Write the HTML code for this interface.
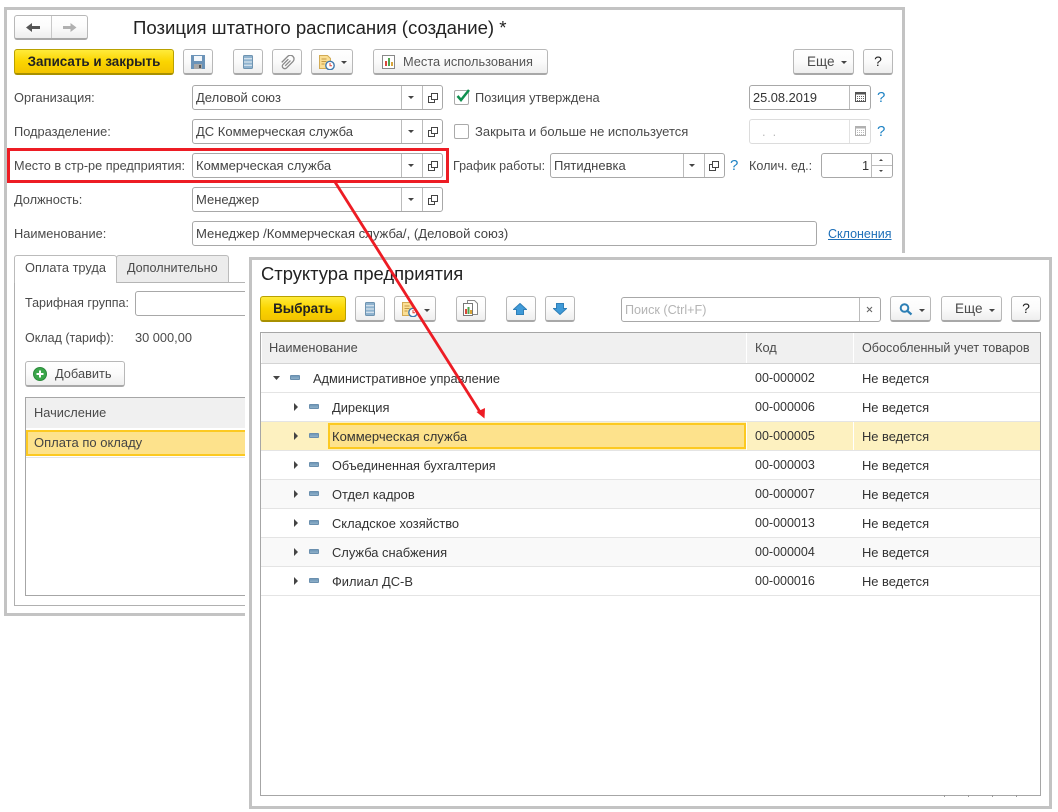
<!DOCTYPE html>
<html><head><meta charset="utf-8"><style>
html,body{margin:0;padding:0;background:#fff}
#r{position:relative;width:1058px;height:812px;overflow:hidden;background:#fff;font-family:"Liberation Sans",sans-serif;font-size:12.8px;color:#4a4a4a}
#r div,#r svg,#r span{position:absolute;box-sizing:border-box}
.t{white-space:nowrap;height:20px;line-height:20px}
.d{color:#333;font-size:12.9px;margin-top:1px}
.n{font-size:13px;color:#444}
.c{color:#333;font-size:12.5px}
.b{background:linear-gradient(#fff 0,#fbfbfb 50%,#eee 100%);border:1px solid #b8b8b8;border-bottom:2px solid #a8a8a8;border-radius:3px;text-align:center;line-height:24px;white-space:nowrap}
.y{background:linear-gradient(#ffeb3b,#fbd500 50%,#f3c400);border:1px solid #b9a100;border-bottom:2px solid #a89000;border-radius:3px;text-align:center;color:#222;font-weight:bold;line-height:24px;font-size:13.4px;white-space:nowrap}
.f{background:#fff;border:1px solid #a8a8a8;border-radius:3px;height:25px}
.v{width:1px;top:0;bottom:0;background:#bbb}
.l{height:1px;background:#e4e4e4}
.q{color:#1d82c4;font-size:15px;white-space:nowrap;line-height:20px;height:20px}
.ic{background:linear-gradient(#6f97b8,#8fb0c9);width:10px;height:5px;border:1px solid #6a8fae;border-radius:1px}
</style></head><body><div id="r">

<svg width="0" height="0" style="left:0;top:0"><defs>
<g id="dd"><path d="M0 0h6l-3 3z" fill="#444"/></g>
<g id="op"><path d="M3.500 3.500h-3v6h6v-3M3.500 .5h6v6h-6z" fill="#fff" stroke="#444" stroke-width="1"/></g>
<g id="cal"><rect x=".5" y="1.500" width="10" height="9" fill="#fff" stroke="#555"/><rect x="1" y="1.500" width="9" height="2" fill="#555"/><path d="M2 5.500h7M2 7.500h7M2 9.500h7" stroke="#666" stroke-dasharray="1 1"/></g>
<g id="lst"><rect x=".5" y=".5" width="9" height="13" rx="1" fill="#8fb3cf" stroke="#6e93b0"/><path d="M1 3.800h8M1 7h8M1 10.200h8" stroke="#e8f0f6" stroke-width="1"/></g>
<g id="doc"><path d="M.5 .5h8l3 3v10h-11z" fill="#fbdf94" stroke="#d2ab55"/><path d="M2.500 4h5M2.500 6.500h5M2.500 9h3" stroke="#c49a44"/><circle cx="11" cy="10.500" r="4.200" fill="#fff" stroke="#3f79ad" stroke-width="1.400"/><path d="M11 8v2.800h2" stroke="#d8453a" fill="none"/></g>
</defs></svg>

<!-- back window -->
<div style="left:4px;top:7px;width:901px;height:609px;background:#fff;border:3px solid #c3c3c3"></div>

<!-- nav -->
<div class="b" style="left:14px;top:15px;width:74px;height:25px"></div>
<div style="left:51px;top:16px;width:1px;height:22px;background:#c8c8c8"></div>
<svg style="left:26px;top:22px" width="15" height="11"><path d="M0 5.500L6 1v3h8v3H6v3z" fill="#555"/></svg>
<svg style="left:62px;top:22px" width="15" height="11"><path d="M14.500 5.500L8.500 1v3H1v3h7.500v3z" fill="#b0b0b0"/></svg>
<div class="t" style="left:133px;top:17px;font-size:18.6px;color:#222;height:22px;line-height:22px">Позиция штатного расписания (создание) *</div>

<!-- toolbar -->
<div class="y" style="left:14px;top:49px;width:160px;height:26px">Записать и закрыть</div>
<div class="b" style="left:183px;top:49px;width:30px;height:26px"></div>
<svg style="left:191px;top:55px" width="14" height="14"><path d="M0 0h14v14H0z" fill="#6b93b8"/><rect x="3" y="1" width="8" height="5" fill="#f2f6fa"/><rect x="3" y="9" width="8" height="5" fill="#a8a8a8"/><rect x="8" y="10" width="2" height="3" fill="#555"/></svg>
<div class="b" style="left:233px;top:49px;width:30px;height:26px"></div>
<svg style="left:243px;top:55px" width="10" height="14"><use href="#lst"/></svg>
<div class="b" style="left:272px;top:49px;width:30px;height:26px"></div>
<svg style="left:280px;top:55px" width="16" height="16" viewBox="0 0 16 16"><g transform="rotate(45 8 8)" fill="none" stroke="#8a8a8a" stroke-width="1.300"><path d="M5.500 5v7.500a2.500 2.500 0 0 0 5 0V3.500a3.700 3.700 0 0 0-7.400 0V12"/><path d="M8 4.500V12"/></g></svg>
<div class="b" style="left:311px;top:49px;width:42px;height:26px"></div>
<svg style="left:319px;top:55px" width="16" height="15"><use href="#doc"/></svg>
<svg style="left:341px;top:61px" width="6" height="4"><use href="#dd"/></svg>
<div class="b" style="left:373px;top:49px;width:175px;height:26px;text-align:left;padding-left:29px;color:#555;line-height:23px">Места использования</div>
<svg style="left:382px;top:55px" width="13" height="14"><rect x=".5" y=".5" width="12" height="13" fill="#fff" stroke="#888"/><rect x="3" y="6" width="2" height="5" fill="#d9473a"/><rect x="6" y="3" width="2" height="8" fill="#4ea24e"/><rect x="9" y="7" width="2" height="4" fill="#d9a63a"/></svg>
<div class="b" style="left:793px;top:49px;width:61px;height:26px;text-align:left;padding-left:13px;font-size:13.5px;line-height:23px">Еще</div>
<svg style="left:841px;top:61px" width="6" height="4"><use href="#dd"/></svg>
<div class="b" style="left:863px;top:49px;width:30px;height:26px;color:#222;font-size:14px;line-height:23px">?</div>

<!-- labels -->
<div class="t" style="left:14px;top:88px">Организация:</div>
<div class="t" style="left:14px;top:122px">Подразделение:</div>
<div class="t" style="left:14px;top:156px;font-size:12.7px">Место в стр-ре предприятия:</div>
<div class="t" style="left:14px;top:190px">Должность:</div>
<div class="t" style="left:14px;top:224px">Наименование:</div>

<!-- fields -->
<div class="f" style="left:192px;top:85px;width:251px"><div class="v" style="left:208px"></div><div class="v" style="left:229px"></div></div>
<div class="t n" style="left:196px;top:88px">Деловой союз</div>
<div class="f" style="left:192px;top:119px;width:251px"><div class="v" style="left:208px"></div><div class="v" style="left:229px"></div></div>
<div class="t n" style="left:196px;top:122px">ДС Коммерческая служба</div>
<div class="f" style="left:192px;top:153px;width:251px"><div class="v" style="left:208px"></div><div class="v" style="left:229px"></div></div>
<div class="t n" style="left:196px;top:156px">Коммерческая служба</div>
<div class="f" style="left:192px;top:187px;width:251px"><div class="v" style="left:208px"></div><div class="v" style="left:229px"></div></div>
<div class="t n" style="left:196px;top:190px">Менеджер</div>
<div class="f" style="left:192px;top:221px;width:625px"></div>
<div class="t n" style="left:196px;top:224px;font-size:13.1px">Менеджер /Коммерческая служба/, (Деловой союз)</div>

<svg style="left:408px;top:96px" width="6" height="4"><use href="#dd"/></svg>
<svg style="left:408px;top:130px" width="6" height="4"><use href="#dd"/></svg>
<svg style="left:408px;top:164px" width="6" height="4"><use href="#dd"/></svg>
<svg style="left:408px;top:198px" width="6" height="4"><use href="#dd"/></svg>
<svg style="left:428px;top:93px" width="10" height="10"><use href="#op"/></svg>
<svg style="left:428px;top:127px" width="10" height="10"><use href="#op"/></svg>
<svg style="left:428px;top:161px" width="10" height="10"><use href="#op"/></svg>
<svg style="left:428px;top:195px" width="10" height="10"><use href="#op"/></svg>

<!-- checkboxes -->
<div style="left:454px;top:90px;width:15px;height:15px;border:1px solid #aaa;border-radius:2px;background:#fff"></div>
<svg style="left:455px;top:88px" width="16" height="15"><path d="M2.500 8l3.500 4L14 2" fill="none" stroke="#109050" stroke-width="2.500"/></svg>
<div class="t" style="left:475px;top:88px">Позиция утверждена</div>
<div style="left:454px;top:124px;width:15px;height:15px;border:1px solid #aaa;border-radius:2px;background:#fff"></div>
<div class="t n" style="left:475px;top:122px;color:#4a4a4a">Закрыта и больше не используется</div>

<!-- dates -->
<div class="f" style="left:749px;top:85px;width:122px"><div class="v" style="left:99px"></div></div>
<div class="t" style="left:753px;top:88px;color:#333">25.08.2019</div>
<svg style="left:855px;top:91px" width="11" height="12"><use href="#cal"/></svg>
<div class="q" style="left:877px;top:88px">?</div>
<div class="f" style="left:749px;top:119px;width:122px;border-color:#dcdcdc"><div class="v" style="left:99px;background:#e2e2e2"></div></div>
<div class="t" style="left:762px;top:122px;color:#bbb">. &nbsp;.</div>
<svg style="left:855px;top:125px;opacity:.45" width="11" height="12"><use href="#cal"/></svg>
<div class="q" style="left:877px;top:122px">?</div>

<!-- grafik -->
<div class="t" style="left:453px;top:156px;font-size:12.5px">График работы:</div>
<div class="f" style="left:550px;top:153px;width:175px"><div class="v" style="left:132px"></div><div class="v" style="left:153px"></div></div>
<div class="t n" style="left:554px;top:156px">Пятидневка</div>
<svg style="left:689px;top:164px" width="6" height="4"><use href="#dd"/></svg>
<svg style="left:709px;top:161px" width="10" height="10"><use href="#op"/></svg>
<div class="q" style="left:730px;top:156px">?</div>
<div class="t" style="left:749px;top:156px;font-size:12.6px">Колич. ед.:</div>
<div class="f" style="left:821px;top:153px;width:72px"><div class="v" style="left:49px"></div><div style="left:50px;right:0;top:11px;height:1px;background:#bbb"></div></div>
<div class="t" style="left:862px;top:156px;color:#333">1</div>
<svg style="left:878px;top:158px" width="6" height="16"><path d="M1 3h4L3 1zM1 12h4l-2 2z" fill="#444"/></svg>

<div class="t" style="left:828px;top:224px;color:#1d6fb8;text-decoration:underline;font-size:12.5px">Склонения</div>

<!-- red box -->
<div style="left:7px;top:148px;width:442px;height:35px;border:3px solid #ed1c24"></div>

<!-- tabs -->
<div style="left:14px;top:282px;width:232px;height:1px;background:#b5b5b5"></div>
<div style="left:14px;top:282px;width:1px;height:324px;background:#b0b0b0"></div>
<div style="left:14px;top:605px;width:232px;height:1px;background:#b0b0b0"></div>
<div style="left:116px;top:255px;width:113px;height:28px;background:#ececec;border:1px solid #bbb;border-bottom:1px solid #b5b5b5;border-radius:3px 3px 0 0"></div>
<div style="left:14px;top:255px;width:103px;height:28px;background:#fff;border:1px solid #bbb;border-bottom:0;border-radius:3px 3px 0 0"></div>
<div class="t" style="left:25px;top:258px">Оплата труда</div>
<div class="t" style="left:127px;top:258px;font-size:12.6px">Дополнительно</div>

<div class="t" style="left:25px;top:293px;font-size:12.5px">Тарифная группа:</div>
<div class="f" style="left:135px;top:291px;width:130px"></div>
<div class="t" style="left:25px;top:328px;font-size:12.5px">Оклад (тариф):</div>
<div class="t" style="left:135px;top:328px">30 000,00</div>

<div class="b" style="left:25px;top:361px;width:100px;height:26px;text-align:left;padding-left:29px;line-height:23px">Добавить</div>
<svg style="left:33px;top:367px" width="14" height="14"><circle cx="7" cy="7" r="6.500" fill="#3aa64a" stroke="#2b8a3b"/><path d="M7 3.500v7M3.500 7h7" stroke="#fff" stroke-width="2"/></svg>

<div style="left:25px;top:397px;width:235px;height:199px;border:1px solid #a6a6a6;background:#fff"></div>
<div style="left:26px;top:398px;width:225px;height:30px;background:#f0f0f0"></div>
<div class="t" style="left:34px;top:403px">Начисление</div>
<div style="left:26px;top:430px;width:225px;height:26px;background:#fde28c;border:2px solid #fcc921;border-right:0"></div>
<div class="t n" style="left:34px;top:433px">Оплата по окладу</div>
<div style="left:26px;top:457px;width:225px;height:1px;background:#e4e4e4"></div>

<!-- front window -->
<div style="left:245px;top:253px;width:813px;height:559px;background:#fff"></div>
<div style="left:249px;top:257px;width:803px;height:552px;background:#fff;border:3px solid #c3c3c3"></div>

<div class="t" style="left:261px;top:263px;font-size:18.4px;color:#222;height:22px;line-height:22px">Структура предприятия</div>

<div class="y" style="left:260px;top:296px;width:86px;height:26px">Выбрать</div>
<div class="b" style="left:355px;top:296px;width:30px;height:26px"></div>
<svg style="left:365px;top:302px" width="10" height="14"><use href="#lst"/></svg>
<div class="b" style="left:394px;top:296px;width:42px;height:26px"></div>
<svg style="left:402px;top:302px" width="16" height="15"><use href="#doc"/></svg>
<svg style="left:424px;top:309px" width="6" height="4"><use href="#dd"/></svg>
<div class="b" style="left:456px;top:296px;width:30px;height:26px"></div>
<svg style="left:463px;top:300px" width="15" height="17"><path d="M4.500 .5h7l3 3v11h-10z" fill="#fff" stroke="#888"/><path d="M.5 3.500h9v12h-9z" fill="#fff" stroke="#777"/><rect x="2" y="9" width="2" height="5" fill="#d9473a"/><rect x="4.500" y="7" width="2" height="7" fill="#4ea24e"/><rect x="7" y="10" width="2" height="4" fill="#d9a63a"/></svg>
<div class="b" style="left:506px;top:296px;width:30px;height:26px"></div>
<svg style="left:513px;top:303px" width="14" height="12"><path d="M7 .5L13.500 6.500H10.500v5h-7v-5H.5z" fill="#3f9ad8" stroke="#2f7fb8"/></svg>
<div class="b" style="left:545px;top:296px;width:30px;height:26px"></div>
<svg style="left:553px;top:303px" width="14" height="12"><path d="M7 11.500L13.500 5.500H10.500V.5h-7v5H.5z" fill="#3f9ad8" stroke="#2f7fb8"/></svg>

<div class="f" style="left:621px;top:297px;width:260px"><div class="v" style="left:237px"></div></div>
<div class="t" style="left:625px;top:300px;color:#b4b4b4;font-size:12.6px">Поиск (Ctrl+F)</div>
<svg style="left:866px;top:306px" width="7" height="7"><path d="M1 1l5 5M6 1l-5 5" stroke="#666" stroke-width="1.100"/></svg>
<div class="b" style="left:890px;top:296px;width:41px;height:26px"></div>
<svg style="left:899px;top:303px" width="14" height="13"><circle cx="5.500" cy="5" r="3.800" fill="none" stroke="#2d7fb5" stroke-width="2"/><path d="M8.500 8l4 3.500" stroke="#2d7fb5" stroke-width="2.200"/></svg>
<svg style="left:919px;top:309px" width="6" height="4"><use href="#dd"/></svg>
<div class="b" style="left:941px;top:296px;width:61px;height:26px;text-align:left;padding-left:13px;font-size:13.5px;line-height:23px">Еще</div>
<svg style="left:989px;top:309px" width="6" height="4"><use href="#dd"/></svg>
<div class="b" style="left:1011px;top:296px;width:30px;height:26px;color:#222;font-size:14px;line-height:23px">?</div>

<!-- table -->
<div style="left:260px;top:332px;width:781px;height:464px;border:1px solid #a6a6a6;background:#fff"></div>
<div style="left:262px;top:333px;width:778px;height:30px;background:#f0f0f0"></div>
<div style="left:746px;top:333px;width:1px;height:30px;background:#fff"></div>
<div style="left:853px;top:333px;width:1px;height:30px;background:#fff"></div>
<div class="t" style="left:269px;top:338px">Наименование</div>
<div class="t" style="left:755px;top:338px">Код</div>
<div class="t" style="left:862px;top:338px;font-size:12.6px">Обособленный учет товаров</div>

<div style="left:261px;top:480px;width:779px;height:28px;background:#f9f9f9"></div>
<div style="left:261px;top:538px;width:779px;height:28px;background:#f9f9f9"></div>
<div style="left:261px;top:422px;width:779px;height:28px;background:#fdf1c0"></div>
<div style="left:328px;top:423px;width:418px;height:26px;background:#fde28c;border:2px solid #fcc921"></div>
<div style="left:746px;top:422px;width:1px;height:28px;background:#fff"></div>
<div style="left:853px;top:422px;width:1px;height:28px;background:#fff"></div>

<div class="l" style="left:261px;top:363px;width:779px;background:#d4d4d4"></div>
<div class="l" style="left:261px;top:392px;width:779px"></div>
<div class="l" style="left:261px;top:421px;width:779px"></div>
<div class="l" style="left:261px;top:450px;width:779px"></div>
<div class="l" style="left:261px;top:479px;width:779px"></div>
<div class="l" style="left:261px;top:508px;width:779px"></div>
<div class="l" style="left:261px;top:537px;width:779px"></div>
<div class="l" style="left:261px;top:566px;width:779px"></div>
<div class="l" style="left:261px;top:595px;width:779px"></div>

<svg style="left:273px;top:376px" width="7" height="4"><path d="M0 0h7L3.500 4z" fill="#444"/></svg>
<div class="ic" style="left:290px;top:375px"></div>
<div class="t d" style="left:313px;top:368px;font-size:12.8px">Административное управление</div>
<div class="t c" style="left:755px;top:368px">00-000002</div><div class="t d" style="left:862px;top:368px">Не ведется</div>

<svg style="left:294px;top:403px" width="4" height="8"><path d="M0 0v8l4-4z" fill="#444"/></svg>
<div class="ic" style="left:309px;top:404px"></div>
<div class="t d" style="left:332px;top:397px">Дирекция</div>
<div class="t c" style="left:755px;top:397px">00-000006</div><div class="t d" style="left:862px;top:397px">Не ведется</div>

<svg style="left:294px;top:432px" width="4" height="8"><path d="M0 0v8l4-4z" fill="#444"/></svg>
<div class="ic" style="left:309px;top:433px"></div>
<div class="t d" style="left:332px;top:426px;font-size:13px">Коммерческая служба</div>
<div class="t c" style="left:755px;top:426px">00-000005</div><div class="t d" style="left:862px;top:426px">Не ведется</div>

<svg style="left:294px;top:461px" width="4" height="8"><path d="M0 0v8l4-4z" fill="#444"/></svg>
<div class="ic" style="left:309px;top:462px"></div>
<div class="t d" style="left:332px;top:455px;font-size:12.7px">Объединенная бухгалтерия</div>
<div class="t c" style="left:755px;top:455px">00-000003</div><div class="t d" style="left:862px;top:455px">Не ведется</div>

<svg style="left:294px;top:490px" width="4" height="8"><path d="M0 0v8l4-4z" fill="#444"/></svg>
<div class="ic" style="left:309px;top:491px"></div>
<div class="t d" style="left:332px;top:484px">Отдел кадров</div>
<div class="t c" style="left:755px;top:484px">00-000007</div><div class="t d" style="left:862px;top:484px">Не ведется</div>

<svg style="left:294px;top:519px" width="4" height="8"><path d="M0 0v8l4-4z" fill="#444"/></svg>
<div class="ic" style="left:309px;top:520px"></div>
<div class="t d" style="left:332px;top:513px">Складское хозяйство</div>
<div class="t c" style="left:755px;top:513px">00-000013</div><div class="t d" style="left:862px;top:513px">Не ведется</div>

<svg style="left:294px;top:548px" width="4" height="8"><path d="M0 0v8l4-4z" fill="#444"/></svg>
<div class="ic" style="left:309px;top:549px"></div>
<div class="t d" style="left:332px;top:542px">Служба снабжения</div>
<div class="t c" style="left:755px;top:542px">00-000004</div><div class="t d" style="left:862px;top:542px">Не ведется</div>

<svg style="left:294px;top:577px" width="4" height="8"><path d="M0 0v8l4-4z" fill="#444"/></svg>
<div class="ic" style="left:309px;top:578px"></div>
<div class="t d" style="left:332px;top:571px">Филиал ДС-В</div>
<div class="t c" style="left:755px;top:571px">00-000016</div><div class="t d" style="left:862px;top:571px">Не ведется</div>

<!-- bottom ticks -->
<div style="left:944px;top:795px;width:1px;height:2px;background:#999"></div>
<div style="left:968px;top:795px;width:1px;height:2px;background:#999"></div>
<div style="left:992px;top:795px;width:1px;height:2px;background:#999"></div>
<div style="left:1016px;top:795px;width:1px;height:2px;background:#999"></div>

<!-- arrow -->
<svg style="left:0;top:0" width="1058" height="812"><path d="M335 182L480 412" stroke="#ed1c24" stroke-width="2.800" fill="none"/><path d="M484.500 418.500L476.500 412 485 408z" fill="#ed1c24"/></svg>

</div></body></html>
